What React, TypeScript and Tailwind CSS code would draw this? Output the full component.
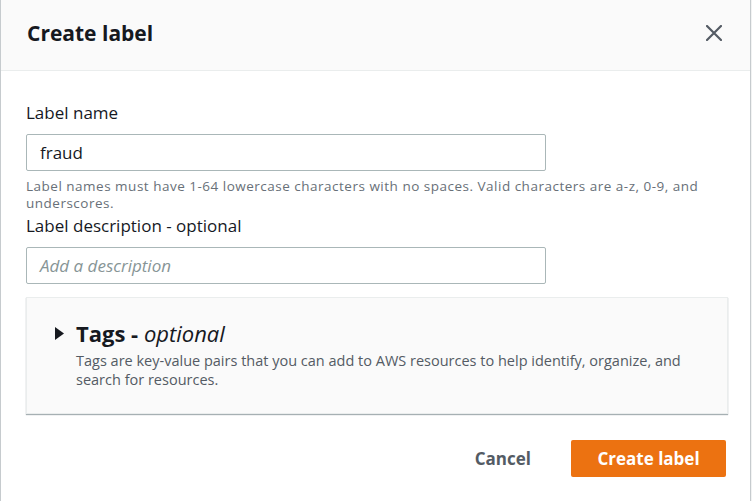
export default function App() {
  return (
    <div className="w-[752px] h-[501px] bg-[#f2f3f3] font-['Open_Sans',sans-serif] text-[#16191f]">
      <div className="w-[751px] h-[501px] bg-white border-x border-[#c6cbce] flex flex-col">
        {/* header */}
        <div className="h-[71px] shrink-0 bg-[#fafafa] border-b border-[#eaeded] flex items-start justify-between pl-[26px] pr-[28px] pt-[19px]">
          <h2 className="text-[21px] leading-[28px] font-bold">Create label</h2>
          <svg width="16" height="16" viewBox="0 0 16 16" className="mt-[6px]">
            <path d="M1 1 L15 15 M15 1 L1 15" stroke="#545b64" strokeWidth="2.2" strokeLinecap="round" />
          </svg>
        </div>

        {/* body */}
        <div className="px-[25px] pt-[31px]">
          <label className="block text-[17px] leading-[22px] mb-[10px]">Label name</label>
          <div className="w-[520px] h-[37px] border border-[#aab7b8] rounded-[2px] flex items-center px-[13px] text-[17px]">
            fraud
          </div>
          <p className="text-[13.5px] tracking-[0.5px] leading-[17px] text-[#687078] mt-[7px] pr-[20px]">
            Label names must have 1-64 lowercase characters with no spaces. Valid characters are a-z, 0-9, and underscores.
          </p>
          <label className="block text-[17px] leading-[22px] mt-[3px] mb-[10px]">Label description - optional</label>
          <div className="w-[520px] h-[37px] border border-[#aab7b8] rounded-[2px] flex items-center px-[13px] text-[17px] italic text-[#879596]">
            Add a description
          </div>

          {/* tags */}
          <div className="mt-[13px] w-[702px] h-[117px] bg-[#fafafa] border border-[#eaeded] shadow-[0_1px_1px_0_rgba(0,28,36,0.35)] pl-[28px] pt-[21px]">
            <div className="flex items-center gap-[12px]">
              <svg width="9" height="13" viewBox="0 0 9 13" className="shrink-0">
                <path d="M0 0 L9 6.5 L0 13 Z" fill="#16191f" />
              </svg>
              <span className="text-[22px] leading-[28px] font-bold">
                Tags - <span className="italic font-normal">optional</span>
              </span>
            </div>
            <p className="ml-[21px] mt-[4px] text-[14.5px] leading-[19px] text-[#545b64] pr-[30px]">
              Tags are key-value pairs that you can add to AWS resources to help identify, organize, and search for resources.
            </p>
          </div>

          {/* footer */}
          <div className="mt-[26px] flex justify-end items-center">
            <button className="text-[17px] font-bold text-[#545b64] h-[37px] mr-[40px]">Cancel</button>
            <button className="w-[155px] h-[37px] -mr-[1px] bg-[#ec7211] rounded-[2px] text-white text-[17px] font-bold">Create label</button>
          </div>
        </div>
      </div>
    </div>
  )
}
